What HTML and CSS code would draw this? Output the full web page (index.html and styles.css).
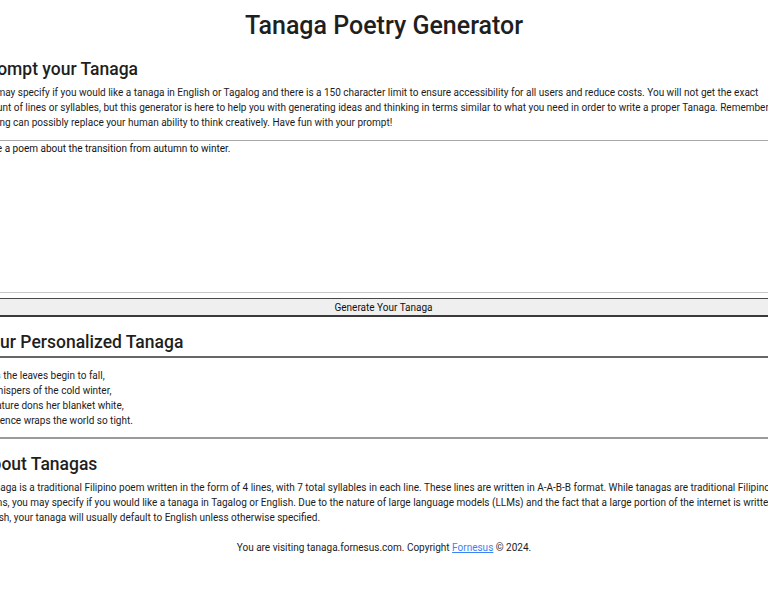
FILE: index.html
```html
<!DOCTYPE html>
<html lang="en">
<head>
<meta charset="utf-8">
<title>Tanaga Poetry Generator</title>
<link rel="stylesheet" href="styles.css">
</head>
<body>
<main class="page">
  <h1 class="title">Tanaga Poetry Generator</h1>
  <section class="prompt">
    <h2 class="heading">Prompt your Tanaga</h2>
    <p class="text">You may specify if you would like a tanaga in English or Tagalog and there is a 150 character limit to ensure accessibility for all users and reduce costs. You will not get the exact amount of lines or syllables, but this generator is here to help you with generating ideas and thinking in terms similar to what you need in order to write a proper Tanaga. Remember nothing can possibly replace your human ability to think creatively. Have fun with your prompt!</p>
    <textarea class="input" maxlength="150">Write a poem about the transition from autumn to winter.</textarea>
    <button class="generate" type="button">Generate Your Tanaga</button>
  </section>
  <section class="result">
    <h2 class="heading heading-result">Your Personalized Tanaga</h2>
    <div class="poem">
      <div>As the leaves begin to fall,</div>
      <div>Whispers of the cold winter,</div>
      <div>Nature dons her blanket white,</div>
      <div>Silence wraps the world so tight.</div>
    </div>
  </section>
  <section class="about">
    <h2 class="heading">About Tanagas</h2>
    <p class="text">A tanaga is a traditional Filipino poem written in the form of 4 lines, with 7 total syllables in each line. These lines are written in A-A-B-B format. While tanagas are traditional Filipino poems, you may specify if you would like a tanaga in Tagalog or English. Due to the nature of large language models (LLMs) and the fact that a large portion of the internet is written in English, your tanaga will usually default to English unless otherwise specified.</p>
  </section>
  <footer class="footer">You are visiting tanaga.fornesus.com. Copyright <a class="link" href="#">Fornesus</a> &copy; 2024.</footer>
</main>
</body>
</html>
```

FILE: styles.css
```css
html, body {
  margin: 0;
  padding: 0;
  background: #ffffff;
  overflow: hidden;
}

body {
  font-family: Roboto, "Liberation Sans", sans-serif;
  color: #1c1c1c;
  font-size: 10px;
  line-height: 15px;
}

.page {
  width: 814px;
  margin-left: -23px;
  display: flex;
  flex-direction: column;
}

.title {
  margin: 0;
  padding-top: 10px;
  font-size: 25px;
  line-height: 32px;
  font-weight: 500;
  text-align: center;
  color: #1f1f1f;
}

.heading {
  margin: 0;
  padding-left: 3px;
  font-size: 17.5px;
  line-height: 24px;
  font-weight: 500;
  color: #1f1f1f;
}

.prompt {
  display: flex;
  flex-direction: column;
  margin-top: 15px;
}

.text {
  margin: 4px 0 0;
}

.input {
  margin-top: 10px;
  height: 153px;
  box-sizing: border-box;
  border: none;
  border-top: 1px solid #a8a8a8;
  border-bottom: 1px solid #c8c8c8;
  padding: 1px 2px;
  font-family: Roboto, "Liberation Sans", sans-serif;
  font-size: 10px;
  line-height: 14px;
  color: #111111;
  resize: none;
  outline: none;
}

.generate {
  margin-top: 5px;
  height: 19px;
  box-sizing: border-box;
  background: #efefef;
  border: none;
  border-top: 1px solid #4a4a4a;
  border-bottom: 2px solid #3a3a3a;
  border-right: 1px solid #d0d0d0;
  padding: 1px 0 0;
  font-family: Roboto, "Liberation Sans", sans-serif;
  font-size: 10px;
  line-height: 15px;
  color: #111111;
}

.result {
  margin-top: 13px;
  display: flex;
  flex-direction: column;
}

.heading-result {
  padding-bottom: 2px;
  border-bottom: 2px solid #666666;
}

.poem {
  padding: 10px 0 9px 12px;
  border-bottom: 2px solid #9a9a9a;
}

.about {
  margin-top: 13px;
  display: flex;
  flex-direction: column;
}

.footer {
  margin-top: 15px;
  text-align: center;
}

.link {
  color: #3b82f6;
  text-decoration: underline;
}
```
